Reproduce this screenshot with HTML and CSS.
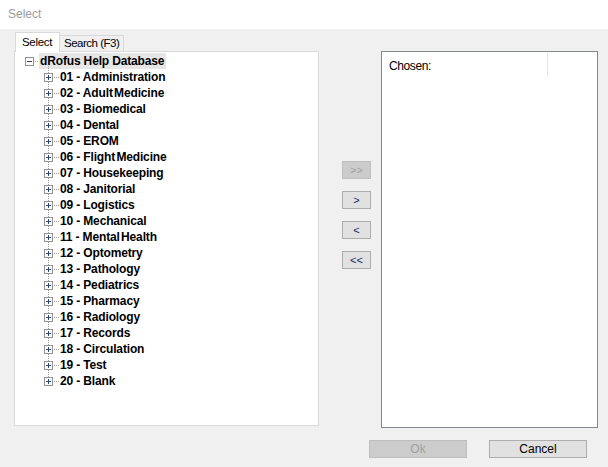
FILE: index.html
```html
<!DOCTYPE html>
<html>
<head>
<meta charset="utf-8">
<link rel="stylesheet" href="styles.css">
</head>
<body>
<div class="titlebar">Select</div>
<div class="main">
  <div class="left">
    <div class="tabs">
      <div class="tab active">Select</div>
      <div class="tab">Search (F3)</div>
    </div>
    <div class="tree">
      <div class="row root"><span class="exp minus"></span><span class="dots"></span><span class="label sel">dRofus Help Database</span></div>
      <div class="children">
        <div class="row"><span class="exp"></span><span class="dots"></span><span class="label">01 - Administration</span></div>
        <div class="row"><span class="exp"></span><span class="dots"></span><span class="label">02 - Adult<span class="ns"> </span>Medicine</span></div>
        <div class="row"><span class="exp"></span><span class="dots"></span><span class="label">03 - Biomedical</span></div>
        <div class="row"><span class="exp"></span><span class="dots"></span><span class="label">04 - Dental</span></div>
        <div class="row"><span class="exp"></span><span class="dots"></span><span class="label">05 - EROM</span></div>
        <div class="row"><span class="exp"></span><span class="dots"></span><span class="label">06 - Flight<span class="ns"> </span>Medicine</span></div>
        <div class="row"><span class="exp"></span><span class="dots"></span><span class="label">07 - Housekeeping</span></div>
        <div class="row"><span class="exp"></span><span class="dots"></span><span class="label">08 - Janitorial</span></div>
        <div class="row"><span class="exp"></span><span class="dots"></span><span class="label">09 - Logistics</span></div>
        <div class="row"><span class="exp"></span><span class="dots"></span><span class="label">10 - Mechanical</span></div>
        <div class="row"><span class="exp"></span><span class="dots"></span><span class="label">11 - Mental<span class="ns"> </span>Health</span></div>
        <div class="row"><span class="exp"></span><span class="dots"></span><span class="label">12 - Optometry</span></div>
        <div class="row"><span class="exp"></span><span class="dots"></span><span class="label">13 - Pathology</span></div>
        <div class="row"><span class="exp"></span><span class="dots"></span><span class="label">14 - Pediatrics</span></div>
        <div class="row"><span class="exp"></span><span class="dots"></span><span class="label">15 - Pharmacy</span></div>
        <div class="row"><span class="exp"></span><span class="dots"></span><span class="label">16 - Radiology</span></div>
        <div class="row"><span class="exp"></span><span class="dots"></span><span class="label">17 - Records</span></div>
        <div class="row"><span class="exp"></span><span class="dots"></span><span class="label">18 - Circulation</span></div>
        <div class="row"><span class="exp"></span><span class="dots"></span><span class="label">19 - Test</span></div>
        <div class="row"><span class="exp"></span><span class="dots"></span><span class="label">20 - Blank</span></div>
      </div>
    </div>
  </div>
  <div class="middle">
    <button class="btn small disabled">&gt;&gt;</button>
    <button class="btn small">&gt;</button>
    <button class="btn small">&lt;</button>
    <button class="btn small">&lt;&lt;</button>
  </div>
  <div class="right">
    <div class="chosen">
      <div class="header"><div class="col">Chosen:</div></div>
    </div>
  </div>
</div>
<div class="footer">
  <button class="btn wide disabled">Ok</button>
  <button class="btn wide">Cancel</button>
</div>
</body>
</html>
```
FILE: styles.css
```css
* { box-sizing: border-box; }
html, body {
  margin: 0;
  padding: 0;
  width: 608px;
  height: 467px;
  overflow: hidden;
  background: #f0f0f0;
  font-family: "Liberation Sans", Arial, sans-serif;
  font-size: 11px;
  color: #000;
}
.titlebar {
  height: 29px;
  background: #fff;
  color: #9a9a9a;
  font-size: 12px;
  line-height: 29px;
  padding-left: 8px;
}
.main {
  display: grid;
  grid-template-columns: 305px 62px 217px;
  padding: 3px 0 0 14px;
}
.tabs {
  display: flex;
  align-items: flex-end;
  height: 19px;
  padding-left: 1px;
}
.tab {
  height: 16px;
  line-height: 15px;
  padding: 0 4px;
  border: 1px solid #d9d9d9;
  border-bottom: none;
  background: #f0f0f0;
  font-size: 11.5px;
  letter-spacing: -0.5px;
  margin-left: -1px;
}
.tab.active {
  height: 20px;
  line-height: 18px;
  background: #fff;
  padding: 0 6px;
  margin-left: 0;
  margin-bottom: -1px;
  position: relative;
  z-index: 1;
  width: 45px;
  letter-spacing: -0.3px;
}
.tree {
  height: 375px;
  background: #fff;
  border: 1px solid #d9d9d9;
  padding-top: 1px;
  font-weight: bold;
  font-size: 12px;
  letter-spacing: -0.15px;
}
.row {
  display: flex;
  align-items: center;
  height: 16px;
  padding-left: 29px;
}
.row.root { padding-left: 10px; }
.exp {
  width: 9px;
  height: 9px;
  flex: none;
  border: 1px solid #919191;
  background:
    linear-gradient(#2a4680, #2a4680) center / 5px 1px no-repeat,
    linear-gradient(#2a4680, #2a4680) center / 1px 5px no-repeat,
    #fff;
  position: relative;
  z-index: 1;
}
.exp.minus {
  background:
    linear-gradient(#2a4680, #2a4680) center / 5px 1px no-repeat,
    #fff;
}
.dots {
  width: 5px;
  flex: none;
  border-top: 1px dotted #a0a0a0;
  margin: 0 1px 0 1px;
}
.label { white-space: nowrap; line-height: 16px; }
.label.sel {
  background: #e6e6e6;
  padding: 0 2px 0 1px;
  margin-left: -2px;
}
.ns { letter-spacing: -2px; }
.children { position: relative; }
.children::before {
  content: "";
  position: absolute;
  left: 33px;
  top: -3px;
  bottom: 8px;
  border-left: 1px dotted #a0a0a0;
}
.middle {
  display: flex;
  flex-direction: column;
  align-items: flex-start;
  gap: 12px;
  padding: 129px 0 0 23px;
}
.btn {
  font-family: "Liberation Sans", Arial, sans-serif;
  font-size: 11px;
  background: #e1e1e1;
  border: 1px solid #adadad;
  color: #000;
  padding: 0;
  margin: 0;
  height: 18px;
  line-height: 16px;
}
.btn.small { width: 29px; color: #1a2a5a; }
.btn.disabled {
  background: #cccccc;
  border-color: #bfbfbf;
  color: #a0a0a0;
}
.right { padding-top: 19px; }
.chosen {
  height: 377px;
  width: 217px;
  background: #fff;
  border: 1px solid #828790;
}
.header {
  height: 25px;
  padding-top: 1px;
}
.col {
  width: 166px;
  height: 24px;
  border-right: 1px solid #e5e5e5;
  padding: 6px 0 0 7px;
  line-height: 15px;
  font-size: 12px;
  letter-spacing: -0.4px;
}
.footer {
  display: flex;
  justify-content: flex-end;
  gap: 22px;
  padding: 12px 21px 0 0;
}
.btn.wide { width: 98px; height: 18px; font-size: 12px; }
```
